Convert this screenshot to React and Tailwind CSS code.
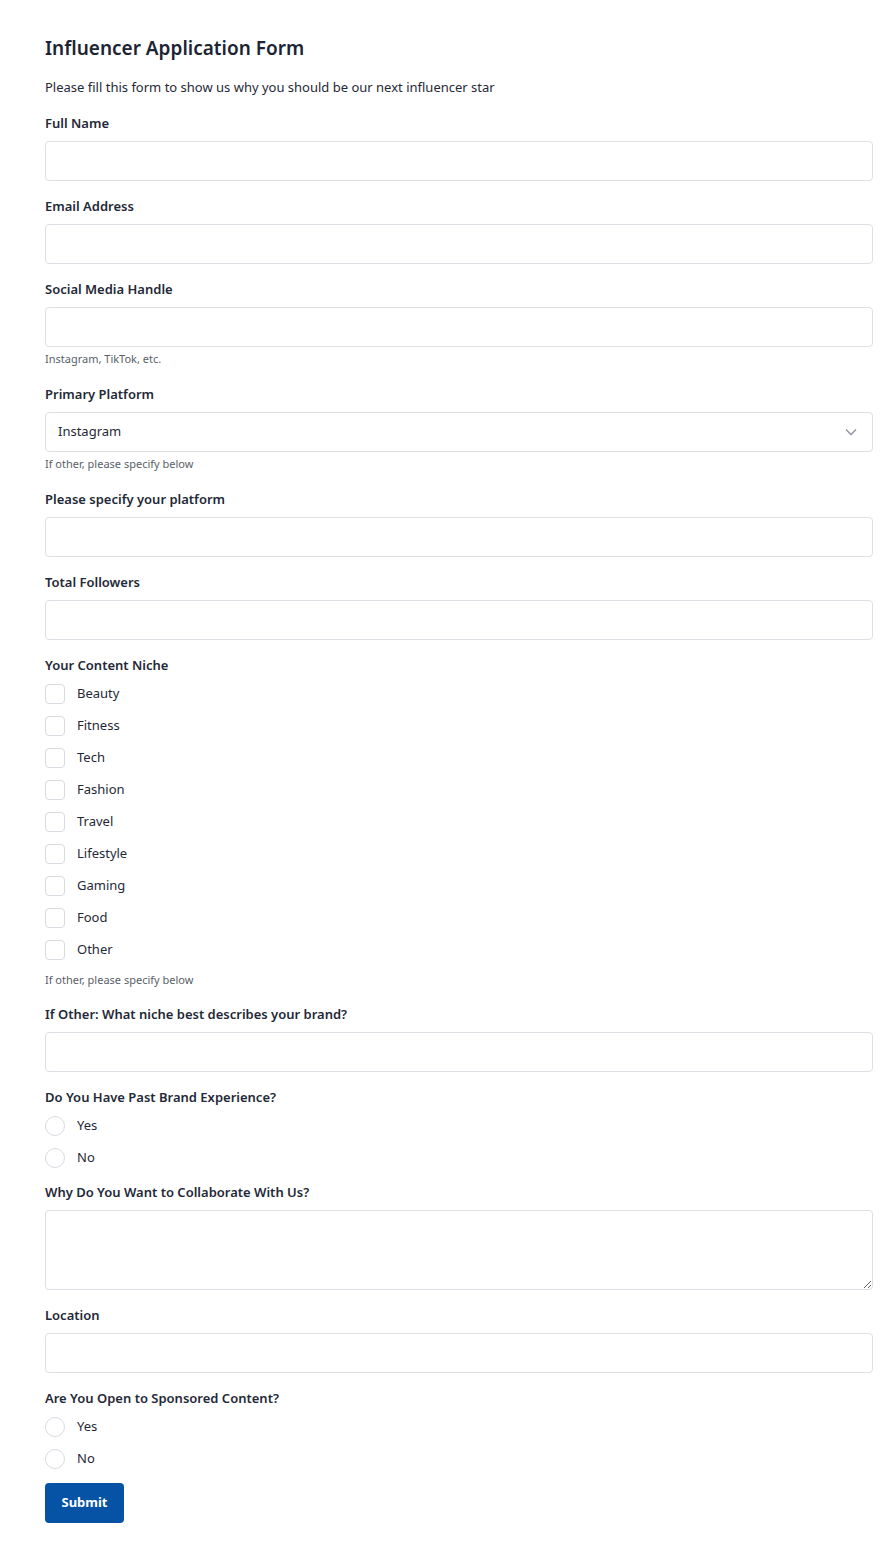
import React from "react";

const font = { fontFamily: '"Noto Sans", "Open Sans", sans-serif' };

function Label({ children }) {
  return (
    <div className="text-[13px] leading-[20px] font-semibold text-[#1f2937]">{children}</div>
  );
}

function TextField({ label, help }) {
  return (
    <div className={help ? "mb-[17px]" : "mb-[15px]"}>
      <Label>{label}</Label>
      <input
        type="text"
        className="mt-2 block w-full h-10 rounded-[4px] border border-[#dcdfe4] bg-white px-3 text-[13px] outline-none"
      />
      {help && <div className="mt-1 text-[11px] leading-4 text-[#595f69]">{help}</div>}
    </div>
  );
}

function Checkbox({ label }) {
  return (
    <label className="flex h-8 items-center">
      <span className="block h-5 w-5 rounded-[4px] border border-[#d7dbe0] bg-white"></span>
      <span className="ml-3 text-[13px] text-[#1f2937]">{label}</span>
    </label>
  );
}

function Radio({ label }) {
  return (
    <label className="flex h-8 items-center">
      <span className="block h-5 w-5 rounded-full border border-[#d7dbe0] bg-white"></span>
      <span className="ml-3 text-[13px] text-[#1f2937]">{label}</span>
    </label>
  );
}

export default function App() {
  const niches = ["Beauty", "Fitness", "Tech", "Fashion", "Travel", "Lifestyle", "Gaming", "Food", "Other"];
  return (
    <div className="min-h-[1560px] bg-white pl-[45px] pr-[16px] pt-[34px] pb-10 text-[#1f2937]" style={font}>
      <h1 className="text-[19px] leading-[28px] font-semibold text-[#1c2433]">Influencer Application Form</h1>
      <p className="mt-[15px] text-[13px] leading-[20px] text-[#1f2937]">
        Please fill this form to show us why you should be our next influencer star
      </p>
      <div className="mt-4">
        <TextField label="Full Name" />
        <TextField label="Email Address" />
        <TextField label="Social Media Handle" help="Instagram, TikTok, etc." />

        <div className="mb-[17px]">
          <Label>Primary Platform</Label>
          <div className="relative mt-2 flex h-10 w-full items-center rounded-[4px] border border-[#dcdfe4] bg-white px-3 text-[13px]">
            <span>Instagram</span>
            <svg className="absolute right-[15px] top-[15px]" width="12" height="8" viewBox="0 0 12 8" fill="none">
              <path d="M1 1.5 L6 6.5 L11 1.5" stroke="#8a919c" strokeWidth="1.3" />
            </svg>
          </div>
          <div className="mt-1 text-[11px] leading-4 text-[#595f69]">If other, please specify below</div>
        </div>

        <TextField label="Please specify your platform" />
        <TextField label="Total Followers" />

        <div className="mb-4">
          <Label>Your Content Niche</Label>
          <div className="mt-[3px]">
            {niches.map((n) => (
              <Checkbox key={n} label={n} />
            ))}
          </div>
          <div className="mt-[6px] text-[11px] leading-4 text-[#595f69]">If other, please specify below</div>
        </div>

        <TextField label="If Other: What niche best describes your brand?" />

        <div className="mb-[8px]">
          <Label>Do You Have Past Brand Experience?</Label>
          <div className="mt-[3px]">
            <Radio label="Yes" />
            <Radio label="No" />
          </div>
        </div>

        <div className="mb-[15px]">
          <Label>Why Do You Want to Collaborate With Us?</Label>
          <textarea className="mt-2 block h-20 w-full rounded-[4px] border border-[#dcdfe4] bg-white px-3 py-2 text-[13px] outline-none"></textarea>
        </div>

        <TextField label="Location" />

        <div className="mb-[8px]">
          <Label>Are You Open to Sponsored Content?</Label>
          <div className="mt-[3px]">
            <Radio label="Yes" />
            <Radio label="No" />
          </div>
        </div>

        <button className="h-10 w-[79px] rounded-[4px] bg-[#0653a5] text-[13px] font-bold text-white">Submit</button>
      </div>
    </div>
  );
}
